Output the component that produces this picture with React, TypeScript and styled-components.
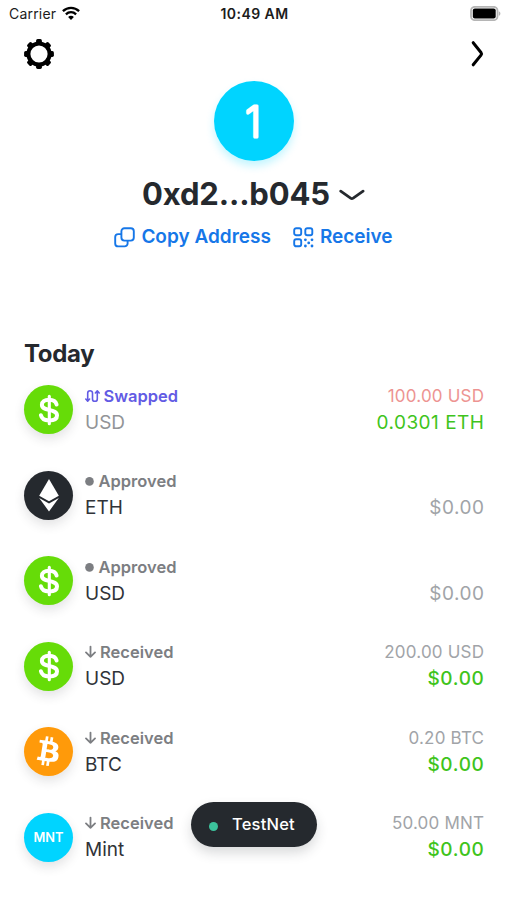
import React from "react";
import styled, { createGlobalStyle } from "styled-components";
import { FaBitcoin } from "react-icons/fa6";

const GlobalStyle = createGlobalStyle`
  * { box-sizing: border-box; }
  body { margin: 0; background: #fff; font-family: Inter, "Liberation Sans", sans-serif; color: #25292e; }
  svg { display: block; flex: none; }
`;

const Screen = styled.div`
  position: relative;
  width: 507px;
  height: 900px;
  overflow: hidden;
  background: #fff;
`;

const StatusBar = styled.header`
  display: grid;
  grid-template-columns: 1fr auto 1fr;
  align-items: center;
  height: 27px;
  padding: 0 6px 0 9px;
  font-size: 14px;
  line-height: 27px;
  color: #1c1c1c;
`;

const Carrier = styled.div`
  display: flex;
  align-items: center;
  gap: 6px;
  letter-spacing: 0.2px;
`;

const Clock = styled.div`
  margin-right: 1px;
  font-weight: 600;
  letter-spacing: 0.45px;
`;

const BatteryHolder = styled.div`
  display: flex;
  justify-content: flex-end;
`;

const NavBar = styled.nav`
  display: flex;
  align-items: center;
  justify-content: space-between;
  height: 53px;
  padding: 0 20px 0 23px;
`;

const Profile = styled.section`
  display: flex;
  flex-direction: column;
  align-items: center;
  padding-top: 1px;
`;

const Avatar = styled.div`
  width: 80px;
  height: 80px;
  border-radius: 50%;
  background: #00d4ff;
  box-shadow: 0 5px 9px rgba(0, 212, 255, 0.24);
`;

const Digit = styled.text`
  fill: #fff;
  stroke: #fff;
  stroke-width: 3.2px;
  stroke-linejoin: round;
  font-family: Inter, sans-serif;
  font-size: 42px;
  font-weight: 200;
  text-anchor: middle;
`;

const Account = styled.div`
  display: flex;
  align-items: center;
  gap: 9px;
  height: 40px;
  margin-top: 13px;
`;

const Address = styled.h1`
  margin: 0;
  font-size: 31px;
  line-height: 40px;
  font-weight: 650;
  letter-spacing: -0.15px;
`;

const Actions = styled.div`
  display: flex;
  gap: 22px;
  margin-top: 11px;
`;

const Action = styled.a`
  display: flex;
  align-items: center;
  gap: 6px;
  height: 24px;
  font-size: 19px;
  line-height: 24px;
  font-weight: 580;
  color: #1677e8;
`;

const History = styled.main`
  padding: 89.5px 23px 0 24px;
`;

const DayTitle = styled.h2`
  margin: 0 0 15px;
  font-size: 24px;
  line-height: 30px;
  font-weight: 650;
  letter-spacing: -0.3px;
`;

const Rows = styled.div`
  display: grid;
  grid-auto-rows: 52px;
  row-gap: 33.5px;
`;

const Row = styled.article`
  display: grid;
  grid-template-columns: 49px 1fr auto;
  column-gap: 12px;
  align-items: center;
`;

const Coin = styled.div<{ $fill: string }>`
  display: flex;
  align-items: center;
  justify-content: center;
  width: 49px;
  height: 49px;
  border-radius: 50%;
  background: ${(p) => p.$fill};
  box-shadow: 0 5px 11px rgba(37, 41, 46, 0.13);
  color: #fff;
  font-size: 12.8px;
  font-weight: 600;
`;

const BitcoinMark = styled(FaBitcoin)`
  color: #ff9a0a;
  transform: rotate(-5deg);
`;

const Lines = styled.div<{ $end?: boolean }>`
  display: flex;
  flex-direction: column;
  align-items: ${(p) => (p.$end ? "flex-end" : "flex-start")};
  white-space: nowrap;
`;

const Status = styled.div<{ $color: string; $gap: number }>`
  display: flex;
  align-items: center;
  gap: ${(p) => p.$gap}px;
  height: 26px;
  padding-bottom: 2px;
  color: ${(p) => p.$color};
  font-size: 16.5px;
  line-height: 24px;
  font-weight: 590;
`;

const Asset = styled.div<{ $dim?: boolean }>`
  font-size: 19px;
  line-height: 26px;
  color: ${(p) => (p.$dim ? "#929497" : "#303338")};
`;

const Amount = styled.div<{ $color: string }>`
  height: 26px;
  font-size: 17px;
  line-height: 25px;
  letter-spacing: 0.2px;
  margin-right: -0.2px;
  color: ${(p) => p.$color};
`;

const Value = styled.div<{ $color: string; $strong?: boolean }>`
  font-size: 19px;
  line-height: 26px;
  letter-spacing: ${(p) => (p.$strong ? 0.65 : 0.5)}px;
  margin-right: -0.5px;
  font-weight: ${(p) => (p.$strong ? 500 : 420)};
  color: ${(p) => p.$color};
`;

const NetworkPill = styled.button`
  position: absolute;
  left: 191px;
  top: 802px;
  display: flex;
  align-items: center;
  gap: 14px;
  width: 126px;
  height: 45px;
  padding: 0 0 0 18px;
  border: 0;
  border-radius: 23px;
  background: #25292e;
  box-shadow: 0 6px 12px rgba(37, 41, 46, 0.17);
  color: #fff;
  font: 550 16.5px/44px Inter, "Liberation Sans", sans-serif;
  letter-spacing: 0.2px;
`;

const Dot = styled.span`
  width: 9px;
  height: 9px;
  margin-top: 4px;
  border-radius: 50%;
  background: #3cc29c;
`;

const Label = styled.span`
  height: 45px;
`;

const Wifi = () => (
  <svg width="18" height="15" viewBox="0 0 18 15" fill="none" stroke="#000" strokeWidth="2.3">
    <path d="M.9 5.2c4.7-4.5 11.5-4.5 16.2 0M3.9 8.3c2.9-2.8 7.3-2.8 10.2 0" />
    <path d="M6.1 10.9c1.6-1.5 4.2-1.5 5.8 0L9 13.9Z" fill="#000" stroke="none" />
  </svg>
);

const Battery = () => (
  <svg width="31" height="15" viewBox="0 0 31 15">
    <rect x="1" y=".8" width="26.5" height="13.4" rx="4" fill="#fff" stroke="#b5b5b5" strokeWidth="1.8" />
    <rect x="2.8" y="2.6" width="22.9" height="9.8" rx="2" fill="#000" />
    <path d="M28.8 5.2c2.1.8 2.1 3.8 0 4.6Z" fill="#b5b5b5" />
  </svg>
);

const Gear = () => (
  <svg width="32" height="32" viewBox="-16 -16 32 32">
    <circle r="10.6" fill="none" stroke="#000" strokeWidth="4" />
    {[0, 45, 90, 135, 180, 225, 270, 315].map((a) => (
      <rect key={a} x="-2.9" y="-14.9" width="5.8" height="5.5" rx="1.6" transform={`rotate(${a})`} />
    ))}
  </svg>
);

const Forward = () => (
  <svg width="20" height="30" viewBox="0 0 20 30" fill="none" stroke="#000" strokeWidth="3" strokeLinecap="round" strokeLinejoin="round">
    <path d="M6.2 3.7 14 13.5Q15 14.8 14 16.1L6.2 25.8" />
  </svg>
);

const Chevron = () => (
  <svg width="26" height="16" viewBox="0 0 26 16" fill="none" stroke="#25292e" strokeWidth="2.7" strokeLinecap="round" strokeLinejoin="round">
    <path d="m1.7 5.1 9.9 7.1q1.3.9 2.6 0L24.1 5.1" />
  </svg>
);

const Copy = () => (
  <svg width="21" height="21" viewBox="0 0 21 21" fill="none" stroke="currentColor" strokeWidth="1.9" strokeLinejoin="round">
    <rect x="7.4" y="1.2" width="12.4" height="12.4" rx="3" />
    <path d="M7.4 7.1H4.2a3 3 0 0 0-3 3v6.3a3 3 0 0 0 3 3h6.4a3 3 0 0 0 3-3v-2.8" />
  </svg>
);

const Qr = () => (
  <svg width="21" height="21" viewBox="0 0 21 21" fill="none" stroke="currentColor" strokeWidth="1.9">
    <rect x="1.2" y="1.2" width="7" height="7" rx="2" />
    <rect x="12.3" y="1.2" width="7" height="7" rx="2" />
    <rect x="1.2" y="12.3" width="7" height="7" rx="2" />
    <path d="M12.4 12.8h.01M19 12.8h.01M15.7 15.9h.01M12.4 19h.01M19 19h.01" strokeWidth="2.8" strokeLinecap="round" />
  </svg>
);

const Swap = () => (
  <svg width="15" height="14" viewBox="0 0 15 14" fill="none" stroke="currentColor" strokeWidth="1.6" strokeLinecap="round" strokeLinejoin="round">
    <path d="M2.7 12V4.1a2.4 2.4 0 0 1 4.8 0v5.8a2.4 2.4 0 0 0 4.8 0V2M.8 10l1.9 2.1L4.6 10M10.4 4l1.9-2.1L14.2 4" />
  </svg>
);

const Bullet = () => (
  <svg width="9" height="10" viewBox="0 0 9 10">
    <circle cx="4.5" cy="5.4" r="4.3" fill="currentColor" />
  </svg>
);

const Down = () => (
  <svg width="11" height="14" viewBox="0 0 11 14" fill="none" stroke="currentColor" strokeWidth="1.8" strokeLinecap="round" strokeLinejoin="round">
    <path d="M5.5 1.6v10.2M1 7.4l4.5 4.5L10 7.4" />
  </svg>
);

const Dollar = () => (
  <svg width="26" height="34" viewBox="-13 -17 26 34" fill="none" stroke="#fff" strokeWidth="4" strokeLinecap="round">
    <path d="M7.6-5.5C6.6-9.2 3.5-10.2 0-10.2c-4.4 0-7.1 2-7.1 4.9C-7.1-1.8-4-1 0-.1 4.5.9 8 1.8 8 5.5c0 3.3-3.2 4.9-8 4.9-4.5 0-7.4-1.7-8.1-5.2" />
    <path d="M.3-13.6v27.4" strokeWidth="3.1" />
  </svg>
);

const Ether = () => (
  <svg width="22" height="34" viewBox="-11 -17 22 34" fill="#fff">
    <path d="M0-16 9.8.7 0 6.3-9.8.7Z" />
    <path d="m-9.8 2.9 9.8 5.6 9.8-5.6L0 16.5Z" />
  </svg>
);

type Kind = "swapped" | "approved" | "received";
type Token = "USD" | "ETH" | "BTC" | "Mint";

const kinds: Record<Kind, { label: string; color: string; gap: number; icon: React.ReactNode }> = {
  swapped: { label: "Swapped", color: "#625be4", gap: 3.5, icon: <Swap /> },
  approved: { label: "Approved", color: "#7c7e82", gap: 4.5, icon: <Bullet /> },
  received: { label: "Received", color: "#7c7e82", gap: 4, icon: <Down /> },
};

const coins: Record<Token, { fill: string; mark: React.ReactNode }> = {
  USD: { fill: "#66dc08", mark: <Dollar /> },
  ETH: { fill: "#25292e", mark: <Ether /> },
  BTC: { fill: "radial-gradient(circle closest-side, #fff 78%, #ff9a0a 80%)", mark: <BitcoinMark size={49} /> },
  Mint: { fill: "#00d4ff", mark: "MNT" },
};

const entries: { kind: Kind; token: Token; amount?: string; value: string; gain?: boolean }[] = [
  { kind: "swapped", token: "USD", amount: "100.00 USD", value: "0.0301 ETH", gain: true },
  { kind: "approved", token: "ETH", value: "$0.00" },
  { kind: "approved", token: "USD", value: "$0.00" },
  { kind: "received", token: "USD", amount: "200.00 USD", value: "$0.00", gain: true },
  { kind: "received", token: "BTC", amount: "0.20 BTC", value: "$0.00", gain: true },
  { kind: "received", token: "Mint", amount: "50.00 MNT", value: "$0.00", gain: true },
];

export default function App() {
  return (
    <Screen>
      <GlobalStyle />
      <StatusBar>
        <Carrier>Carrier <Wifi /></Carrier>
        <Clock>10:49 AM</Clock>
        <BatteryHolder><Battery /></BatteryHolder>
      </StatusBar>
      <NavBar>
        <Gear />
        <Forward />
      </NavBar>
      <Profile>
        <Avatar>
          <svg width="80" height="80" viewBox="0 0 80 80">
            <Digit x="39" y="55.5">1</Digit>
          </svg>
        </Avatar>
        <Account>
          <Address>0xd2...b045</Address>
          <Chevron />
        </Account>
        <Actions>
          <Action><Copy />Copy Address</Action>
          <Action><Qr />Receive</Action>
        </Actions>
      </Profile>
      <History>
        <DayTitle>Today</DayTitle>
        <Rows>
          {entries.map((e, i) => (
            <Row key={i}>
              <Coin $fill={coins[e.token].fill}>{coins[e.token].mark}</Coin>
              <Lines>
                <Status $color={kinds[e.kind].color} $gap={kinds[e.kind].gap}>{kinds[e.kind].icon}{kinds[e.kind].label}</Status>
                <Asset $dim={e.kind === "swapped"}>{e.token}</Asset>
              </Lines>
              <Lines $end>
                <Amount $color={e.kind === "swapped" ? "#ed9492" : "#a1a4a8"}>{e.amount}</Amount>
                <Value $color={e.gain ? "#3fc41c" : "#a1a4a8"} $strong={e.kind === "received"}>{e.value}</Value>
              </Lines>
            </Row>
          ))}
        </Rows>
      </History>
      <NetworkPill><Dot /><Label>TestNet</Label></NetworkPill>
    </Screen>
  );
}
